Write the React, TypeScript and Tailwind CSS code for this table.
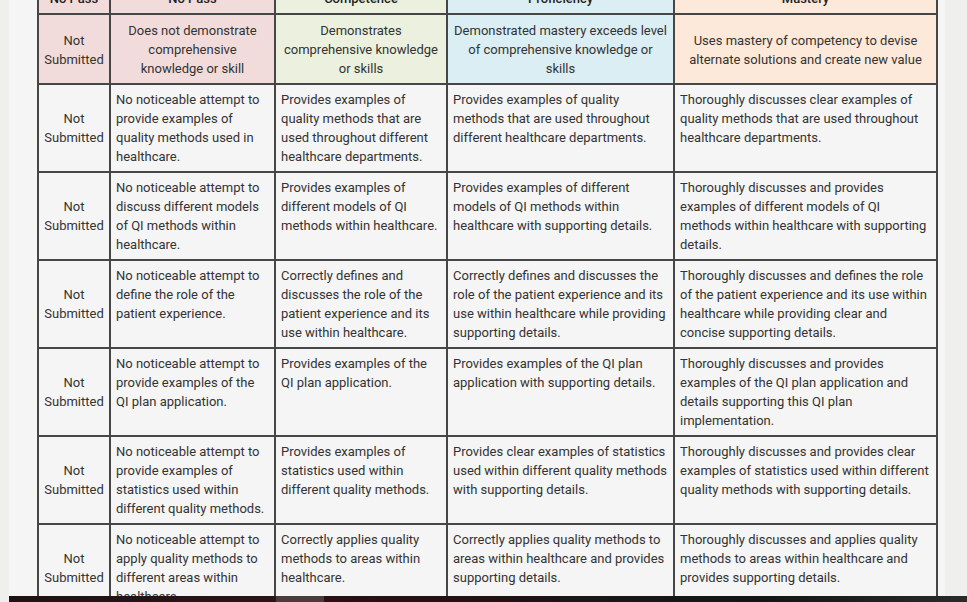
const HEAD = [
  { label: 'No Pass', bg: 'bg-[#f2dcdb]' },
  { label: 'No Pass', bg: 'bg-[#f2dcdb]' },
  { label: 'Competence', bg: 'bg-[#ebf1de]' },
  { label: 'Proficiency', bg: 'bg-[#dbeef3]' },
  { label: 'Mastery', bg: 'bg-[#fde9d9]' },
]

const DESCRIPTIONS = [
  'Not Submitted',
  'Does not demonstrate comprehensive knowledge or skill',
  'Demonstrates comprehensive knowledge or skills',
  'Demonstrated mastery exceeds level of comprehensive knowledge or skills',
  'Uses mastery of competency to devise alternate solutions and create new value',
]

const ROWS = [
  [
    'No noticeable attempt to provide examples of quality methods used in healthcare.',
    'Provides examples of quality methods that are used throughout different healthcare departments.',
    'Provides examples of quality methods that are used throughout different healthcare departments.',
    'Thoroughly discusses clear examples of quality methods that are used throughout healthcare departments.',
  ],
  [
    'No noticeable attempt to discuss different models of QI methods within healthcare.',
    'Provides examples of different models of QI methods within healthcare.',
    'Provides examples of different models of QI methods within healthcare with supporting details.',
    'Thoroughly discusses and provides examples of different models of QI methods within healthcare with supporting details.',
  ],
  [
    'No noticeable attempt to define the role of the patient experience.',
    'Correctly defines and discusses the role of the patient experience and its use within healthcare.',
    'Correctly defines and discusses the role of the patient experience and its use within healthcare while providing supporting details.',
    'Thoroughly discusses and defines the role of the patient experience and its use within healthcare while providing clear and concise supporting details.',
  ],
  [
    'No noticeable attempt to provide examples of the QI plan application.',
    'Provides examples of the QI plan application.',
    'Provides examples of the QI plan application with supporting details.',
    'Thoroughly discusses and provides examples of the QI plan application and details supporting this QI plan implementation.',
  ],
  [
    'No noticeable attempt to provide examples of statistics used within different quality methods.',
    'Provides examples of statistics used within different quality methods.',
    'Provides clear examples of statistics used within different quality methods with supporting details.',
    'Thoroughly discusses and provides clear examples of statistics used within different quality methods with supporting details.',
  ],
  [
    'No noticeable attempt to apply quality methods to different areas within healthcare.',
    'Correctly applies quality methods to areas within healthcare.',
    'Correctly applies quality methods to areas within healthcare and provides supporting details.',
    'Thoroughly discusses and applies quality methods to areas within healthcare and provides supporting details.',
  ],
]

const cell = 'border-2 border-[#464646] px-[5px] py-[5px]'

export default function App() {
  return (
    <div className="h-screen overflow-hidden flow-root bg-[#efefed] font-['Roboto',sans-serif] text-[13px] leading-[19px] text-[#333]">
      <div className="ml-[9px] w-[936px] h-full flow-root bg-[#f5f5f5]">
        <div className="-mt-[18px] pl-[28px]">
          <table className="table-fixed border-collapse w-[901px]">
            <colgroup>
              <col className="w-[72px]" />
              <col className="w-[165px]" />
              <col className="w-[172px]" />
              <col className="w-[227px]" />
              <col className="w-[263px]" />
            </colgroup>
            <thead>
              {/* level names */}
              <tr>
                {HEAD.map((h, i) => (
                  <th key={i} className={`${cell} ${h.bg} font-medium text-[#222] text-center`}>{h.label}</th>
                ))}
              </tr>
              {/* level descriptions */}
              <tr>
                {DESCRIPTIONS.map((d, i) => (
                  <td key={i} className={`${cell} ${HEAD[i].bg} pt-[6px] text-center align-middle`}>{d}</td>
                ))}
              </tr>
            </thead>
            <tbody>
              {ROWS.map((r, i) => (
                <tr key={i}>
                  <td className={`${cell} text-center align-middle`}>Not Submitted</td>
                  {r.map((t, j) => (
                    <td key={j} className={`${cell} align-top`}>{t}</td>
                  ))}
                </tr>
              ))}
            </tbody>
          </table>
        </div>
      </div>

      {/* media strip peeking in at the bottom */}
      <div className="fixed bottom-0 left-[9px] right-0 h-[6px] flex">
        <div className="w-[267px] bg-[linear-gradient(90deg,#1e1214,#2a1418)]" />
        <div className="w-[48px] bg-[#4a3b3d]" />
        <div className="w-[236px] bg-[linear-gradient(90deg,#2b0f15,#1c1215)]" />
        <div className="flex-1 bg-[linear-gradient(90deg,#1a1718,#151515,#2a2a2a)]" />
      </div>
    </div>
  )
}
